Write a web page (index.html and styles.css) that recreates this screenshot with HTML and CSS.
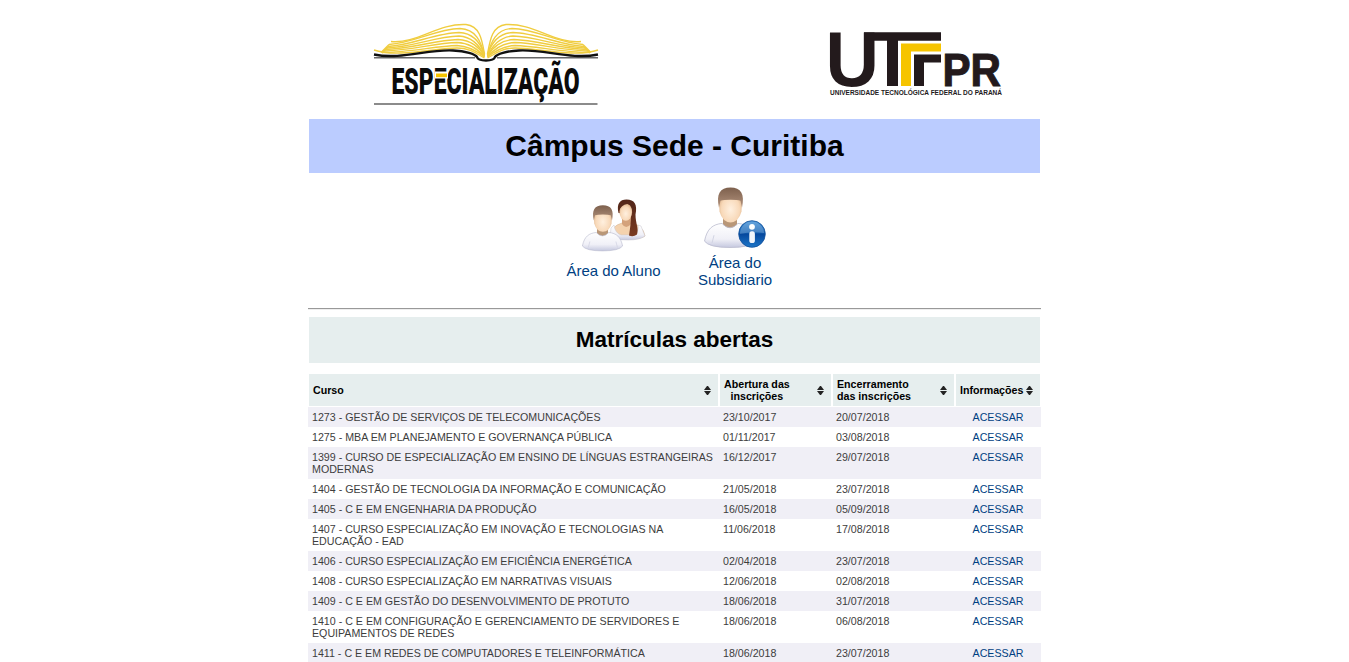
FILE: index.html
```html
<!DOCTYPE html>
<html lang="pt-BR">
<head>
<meta charset="utf-8">
<title>Especialização - Câmpus Sede - Curitiba</title>
<link rel="stylesheet" href="styles.css">
</head>
<body>
<main class="page">
  <header class="brands">
    <svg class="brand-course" viewBox="365 15 240 95" width="240" height="95" role="img" aria-label="Especialização">
      <g id="pages" class="pages">
        <path d="M391 41.500C417 44 438 23 466 24.500C480 26 482 40 484.500 54"/>
        <path d="M389 44.500C414 43 436 29 460 28.500C476 29 481 42 484.500 55"/>
        <path d="M388 46.500C412 45 436 33 459 32.500C474 33 481 44 484.500 55"/>
        <path d="M387 48C412 47 436 36.500 459 36C473 37 480 46 484.500 56"/>
        <path d="M385 49.500C410 49 436 40 458 39.500C471 40 480 48 484.500 56"/>
        <path d="M384 51C410 50.500 436 43 457 42.500C470 43 478 49 484.500 57"/>
        <path d="M382 52.500C409 52.500 436 46 457 45.500C469 46 477 51 484.500 57"/>
        <path d="M374 50C396 58 436 48 457 48C470 48 477 54 484.500 58"/>
        <path d="M389 44.500l-8 8M388 47l-6 6"/>
      </g>
      <use href="#pages" transform="translate(972 0) scale(-1 1)"/>
      <path class="rules" d="M374 57.800H475M497 57.800H598M374 104H597.500"/>
      <path class="cover" d="M374 54.500C401 60 428 49 453 50.500C466 51 475 54 477 57Q478 60.500 486 60.500Q494 60.500 495 57C497 54 506 51 519 50.500C544 49 571 60 598 54.500"/>
      <text class="course-name" x="391.500" y="94" textLength="188" lengthAdjust="spacingAndGlyphs">ESPECIALIZAÇÃO</text>
      <path class="gap" d="M435 71.500h13v7h-13z"/>
      <path class="gold" d="M436 73.500h11v3.700h-11z"/>
    </svg>
    <svg class="brand-school" viewBox="820 20 190 85" width="190" height="85" role="img" aria-label="UTFPR">
      <text class="mark" x="825.500" y="86" font-size="77.500" textLength="53.500" lengthAdjust="spacingAndGlyphs">U</text>
      <path class="ink" d="M864 32.300h77v8.500h-43V86h-11V40.800h-23zM914 54.500h27v8h-17V86h-10z"/>
      <path class="gold" d="M901 43.500h40v8h-30V86h-10z"/>
      <text class="mark heavy" x="942.500" y="86" font-size="45.500" textLength="58.500" lengthAdjust="spacingAndGlyphs">PR</text>
      <text class="school-name" x="830" y="95" textLength="172" lengthAdjust="spacingAndGlyphs">UNIVERSIDADE TECNOLÓGICA FEDERAL DO PARANÁ</text>
    </svg>
  </header>

  <h1 class="campus">Câmpus Sede - Curitiba</h1>

  <svg class="defs" width="0" height="0" aria-hidden="true">
    <defs>
      <radialGradient id="skin" cx=".5" cy=".6" r=".6"><stop offset="0" stop-color="#fff0df"/><stop offset=".65" stop-color="#f8d9b9"/><stop offset="1" stop-color="#d9ad83"/></radialGradient>
      <linearGradient id="shirt" x2="0" y2="1"><stop offset="0" stop-color="#fff"/><stop offset=".65" stop-color="#f0f0f7"/><stop offset="1" stop-color="#c5c8df"/></linearGradient>
      <linearGradient id="hair" x2="0" y2="1"><stop offset="0" stop-color="#7d604d"/><stop offset="1" stop-color="#b3937d"/></linearGradient>
      <linearGradient id="long" x2="0" y2="1"><stop offset="0" stop-color="#522619"/><stop offset="1" stop-color="#7b3c22"/></linearGradient>
      <linearGradient id="blue" x2="0" y2="1"><stop offset="0" stop-color="#3f8fd6"/><stop offset=".45" stop-color="#1762b3"/><stop offset=".5" stop-color="#06489d"/><stop offset="1" stop-color="#1d76c8"/></linearGradient>
      <symbol id="man" viewBox="0 0 52 64" preserveAspectRatio="none">
        <path d="M19 31h14v13q-7 5-14 0z" fill="#b99778"/>
        <path d="M.5 56C3 43 9 39 18 38q8 9 16 0c10 1 15 6 17.500 18Q47 62.500 26 62.500T.5 56z" fill="url(#shirt)" stroke="#b9bbce" stroke-width=".8"/>
        <path d="M10 50l-2 8M43 50l2 8" stroke="#d2d4e3" fill="none"/>
        <path d="M15 17Q15 4 26.500 4T38 17l-.5 9q-3 11-11 11t-11-11z" fill="url(#skin)"/>
        <path d="M15 22C12 8 16 1.500 26.500 1.500S41 8 38 22l-1.500-7q-3-1-10-1t-10 1z" fill="url(#hair)"/>
      </symbol>
    </defs>
  </svg>

  <nav class="areas">
    <a class="area area-student" href="#">
      <svg viewBox="580 196 68 58" width="68" height="58" aria-hidden="true">
        <path d="M610 237q1-11 12-14h9q12 2 14 13-4 3-16 3t-19-2z" fill="#f4d2ae" stroke="#d5b38e" stroke-width=".6"/>
        <path d="M610 238l1-10 3-3q1 8 7 10h13q5-3 4-10l3 1 4 10q-5 4-17 4t-18-2z" fill="url(#shirt)" stroke="#c9c6ce" stroke-width=".5"/>
        <path d="M622 216h9v8q-5 6-9 0z" fill="#d4a27b"/>
        <path d="M618.500 213c-2-9 1-13.500 8-13.500 8 0 11 5 9 15 0 9 3.500 14 1.500 20q-4 3-8 1c1-7 2-13 2-21z" fill="url(#long)"/>
        <ellipse cx="625.800" cy="212" rx="6.300" ry="8.800" fill="url(#skin)"/>
        <path d="M618.700 211q0-10 8-10 7 0 7.500 9-2-5-7-6-6 1-8.500 7z" fill="#56291b"/>
        <use href="#man" x="582" y="204" width="41" height="48"/>
      </svg>
      <span>Área do Aluno</span>
    </a>
    <a class="area area-sponsor" href="#">
      <svg viewBox="703 185 64 65" width="64" height="65" aria-hidden="true">
        <use href="#man" x="704" y="186" width="52" height="63"/>
        <circle cx="752" cy="234" r="13.300" fill="url(#blue)" stroke="#15529a" stroke-width=".8"/>
        <path d="M740 234a12 12 0 0 1 24-1q-12-2-24 1z" fill="#fff" opacity=".2"/>
        <circle cx="752" cy="226.800" r="2.900" fill="#fff"/>
        <rect x="749.300" y="231.300" width="5.600" height="11.700" rx="2.600" fill="#f2f6fb"/>
      </svg>
      <span>Área do<br>Subsidiario</span>
    </a>
  </nav>

  <hr class="divider">
  <h2 class="section-title">Matrículas abertas</h2>

  <section class="courses">
    <div class="row head">
      <div class="cell">Curso<i class="sort"></i></div>
      <div class="cell"><span class="centered">Abertura das<br>inscrições</span><i class="sort"></i></div>
      <div class="cell"><span>Encerramento<br>das inscrições</span><i class="sort"></i></div>
      <div class="cell info">Informações<i class="sort"></i></div>
    </div>
    <div class="row"><span>1273 - GESTÃO DE SERVIÇOS DE TELECOMUNICAÇÕES</span><span>23/10/2017</span><span>20/07/2018</span><a href="#">ACESSAR</a></div>
    <div class="row"><span>1275 - MBA EM PLANEJAMENTO E GOVERNANÇA PÚBLICA</span><span>01/11/2017</span><span>03/08/2018</span><a href="#">ACESSAR</a></div>
    <div class="row"><span>1399 - CURSO DE ESPECIALIZAÇÃO EM ENSINO DE LÍNGUAS ESTRANGEIRAS<br>MODERNAS</span><span>16/12/2017</span><span>29/07/2018</span><a href="#">ACESSAR</a></div>
    <div class="row"><span>1404 - GESTÃO DE TECNOLOGIA DA INFORMAÇÃO E COMUNICAÇÃO</span><span>21/05/2018</span><span>23/07/2018</span><a href="#">ACESSAR</a></div>
    <div class="row"><span>1405 - C E EM ENGENHARIA DA PRODUÇÃO</span><span>16/05/2018</span><span>05/09/2018</span><a href="#">ACESSAR</a></div>
    <div class="row"><span>1407 - CURSO ESPECIALIZAÇÃO EM INOVAÇÃO E TECNOLOGIAS NA<br>EDUCAÇÃO - EAD</span><span>11/06/2018</span><span>17/08/2018</span><a href="#">ACESSAR</a></div>
    <div class="row"><span>1406 - CURSO ESPECIALIZAÇÃO EM EFICIÊNCIA ENERGÉTICA</span><span>02/04/2018</span><span>23/07/2018</span><a href="#">ACESSAR</a></div>
    <div class="row"><span>1408 - CURSO ESPECIALIZAÇÃO EM NARRATIVAS VISUAIS</span><span>12/06/2018</span><span>02/08/2018</span><a href="#">ACESSAR</a></div>
    <div class="row"><span>1409 - C E EM GESTÃO DO DESENVOLVIMENTO DE PROTUTO</span><span>18/06/2018</span><span>31/07/2018</span><a href="#">ACESSAR</a></div>
    <div class="row"><span>1410 - C E EM CONFIGURAÇÃO E GERENCIAMENTO DE SERVIDORES E<br>EQUIPAMENTOS DE REDES</span><span>18/06/2018</span><span>06/08/2018</span><a href="#">ACESSAR</a></div>
    <div class="row"><span>1411 - C E EM REDES DE COMPUTADORES E TELEINFORMÁTICA</span><span>18/06/2018</span><span>23/07/2018</span><a href="#">ACESSAR</a></div>
  </section>
</main>
</body>
</html>
```
FILE: styles.css
```css
* { box-sizing: border-box; }
html, body { height: 100%; }
body { margin: 0; background: #fff; overflow: hidden; font-family: "Liberation Sans", Arial, sans-serif; color: #000; }
a { color: #003f82; text-decoration: none; }
.page { width: 733px; margin-left: 308px; }

.brands { display: flex; justify-content: space-between; align-items: flex-start; height: 119px; padding: 15px 31px 0 57px; }
.brands svg { overflow: visible; }
.brand-school { margin-top: 5px; }
.pages { fill: none; stroke: #f0cd40; stroke-width: 1.4; }
.rules { fill: none; stroke: #666; stroke-width: 1.5; }
.cover { fill: none; stroke: #111; stroke-width: 2.4; }
.course-name { font: 900 36.8px Roboto, sans-serif; fill: #0b0b0b; }
.gap { fill: #fff; }
.gold { fill: #f6c400; }
.ink { fill: #231a1c; }
.mark { font-family: "Liberation Sans", Arial, sans-serif; font-weight: bold; fill: #231a1c; }
.heavy { stroke: #231a1c; stroke-width: 1; }
.school-name { font: bold 6.3px "Liberation Sans", Arial, sans-serif; fill: #231a1c; }

.campus { margin: 0 1px; height: 54px; background: #bbccff; font-size: 30px; line-height: 53px; text-align: center; }
.defs { display: block; }

.areas { display: flex; height: 135px; font-size: 15px; line-height: 17px; text-align: center; }
.area { display: flex; flex-direction: column; align-items: center; }
.area-student { width: 97px; margin-left: 257px; padding-top: 23px; gap: 8px; }
.area-sponsor { width: 76px; margin-left: 35px; padding-top: 12px; gap: 4px; }

.divider { margin: 0; height: 2px; border: 0; border-top: 1px solid #999; border-bottom: 1px solid #eee; }
.section-title { margin: 7px 1px 11px; height: 46px; background: #e6eeee; font-size: 22.5px; line-height: 45px; text-align: center; }

.courses { font-size: 10.67px; line-height: 12px; }
.row { display: grid; grid-template-columns: 411px 113px 123px 86px; padding: 4px 0; color: #3d3d3d; }
.row:nth-child(even) { background: #f0eff6; }
.row > span { padding-left: 4px; white-space: nowrap; }
.row > a { text-align: center; }
.head { grid-template-columns: 409px 111px 121px 84px; gap: 2px; padding: 0 1px; margin-bottom: 1px; color: #000; font-weight: bold; }
.cell { display: flex; align-items: center; justify-content: space-between; height: 32px; padding: 0 7px 0 4px; background: #e6eeee; }
.centered { text-align: center; }
.sort { display: flex; flex-direction: column; gap: 1px; width: 7px; }
.sort::before, .sort::after { content: ""; border: solid transparent; border-width: 0 3.5px 4px; border-bottom-color: #222; }
.sort::after { border-width: 4px 3.5px 0; border-top-color: #222; }
```
